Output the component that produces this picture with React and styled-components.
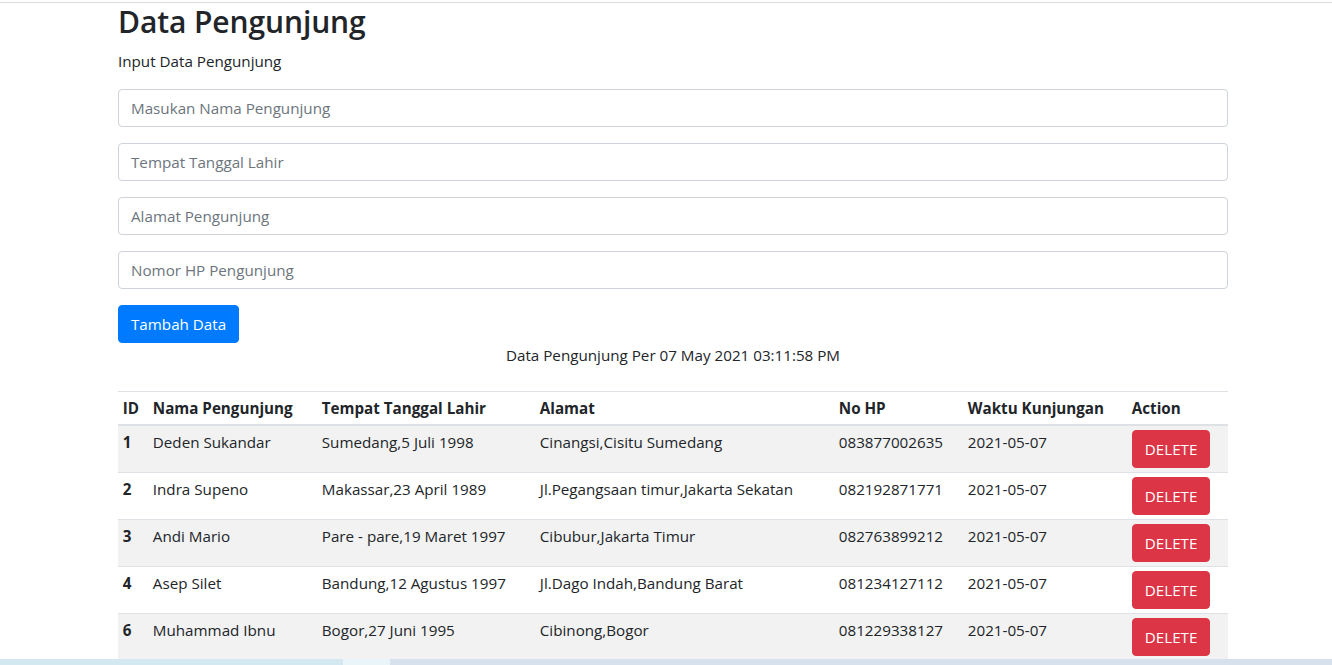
import React from "react";
import styled, { createGlobalStyle } from "styled-components";

const Global = createGlobalStyle`
  html, body { margin: 0; padding: 0; background: #fff; }
  body {
    font-family: "Open Sans", "Noto Sans", "Liberation Sans", sans-serif;
    font-size: 15.2px;
    line-height: 24px;
    color: #212529;
  }
  * { box-sizing: border-box; }
`;

const TopRule = styled.div`
  height: 3px;
  border-bottom: 1px solid #dcdcdc;
`;

const Container = styled.main`
  width: 1110px;
  margin-left: 118px;
`;

const Title = styled.h2`
  margin: 0 0 8px;
  font-size: 30px;
  font-weight: 600;
  line-height: 38px;
  letter-spacing: -0.1px;
`;

const Lead = styled.p`
  margin: 0 0 16px;
`;

const Input = styled.input`
  display: block;
  width: 100%;
  height: 38px;
  padding: 6px 12px;
  margin-bottom: 16px;
  font: inherit;
  color: #495057;
  border: 1px solid #ced4da;
  border-radius: 4px;
  background: #fff;
  &::placeholder { color: #6c757d; opacity: 1; }
`;

const Button = styled.button`
  display: inline-block;
  font: inherit;
  line-height: 24px;
  height: 38px;
  padding: 6px 12px;
  border: 1px solid ${(p) => p.$bg};
  background: ${(p) => p.$bg};
  color: #fff;
  border-radius: 4px;
  cursor: pointer;
`;

const Caption = styled.p`
  text-align: center;
  margin: 0 0 24px;
`;

const Table = styled.table`
  width: 100%;
  border-collapse: collapse;
  table-layout: fixed;
`;

const Th = styled.th`
  text-align: left;
  font-weight: 700;
  padding: 4px 4.8px;
  border-top: 1px solid #dee2e6;
  border-bottom: 2px solid #dee2e6;
  vertical-align: bottom;
  white-space: nowrap;
`;

const Tr = styled.tr`
  background: ${(p) => (p.$odd ? "rgba(0,0,0,0.05)" : "transparent")};
`;

const Td = styled.td`
  padding: 4px 4.8px;
  border-top: 1px solid #dee2e6;
  vertical-align: top;
  font-weight: ${(p) => (p.$bold ? 700 : 400)};
  white-space: nowrap;
`;

const Taskbar = styled.div`
  position: fixed;
  left: 0;
  right: 0;
  bottom: 0;
  height: 6px;
  display: flex;
`;

const TaskSeg = styled.div`
  width: ${(p) => p.$w};
  flex: ${(p) => (p.$grow ? 1 : "none")};
  background: ${(p) => p.$c};
`;

const cols = [30, 169, 218, 299, 129, 164, 101];
const heads = ["ID", "Nama Pengunjung", "Tempat Tanggal Lahir", "Alamat", "No HP", "Waktu Kunjungan", "Action"];
const rows = [
  ["1", "Deden Sukandar", "Sumedang,5 Juli 1998", "Cinangsi,Cisitu Sumedang", "083877002635", "2021-05-07"],
  ["2", "Indra Supeno", "Makassar,23 April 1989", "Jl.Pegangsaan timur,Jakarta Sekatan", "082192871771", "2021-05-07"],
  ["3", "Andi Mario", "Pare - pare,19 Maret 1997", "Cibubur,Jakarta Timur", "082763899212", "2021-05-07"],
  ["4", "Asep Silet", "Bandung,12 Agustus 1997", "Jl.Dago Indah,Bandung Barat", "081234127112", "2021-05-07"],
  ["6", "Muhammad Ibnu", "Bogor,27 Juni 1995", "Cibinong,Bogor", "081229338127", "2021-05-07"],
];

export default function App() {
  return (
    <>
      <Global />
      <TopRule />
      <Container>
        <Title>Data Pengunjung</Title>
        <Lead>Input Data Pengunjung</Lead>
        <Input placeholder="Masukan Nama Pengunjung" />
        <Input placeholder="Tempat Tanggal Lahir" />
        <Input placeholder="Alamat Pengunjung" />
        <Input placeholder="Nomor HP Pengunjung" />
        <Button $bg="#007bff">Tambah Data</Button>
        <Caption>Data Pengunjung Per 07 May 2021 03:11:58 PM</Caption>
        <Table>
          <colgroup>
            {cols.map((w, i) => (
              <col key={i} style={{ width: w }} />
            ))}
          </colgroup>
          <thead>
            <tr>
              {heads.map((h) => (
                <Th key={h}>{h}</Th>
              ))}
            </tr>
          </thead>
          <tbody>
            {rows.map((r, i) => (
              <Tr key={r[0]} $odd={i % 2 === 0}>
                {r.map((c, j) => (
                  <Td key={j} $bold={j === 0}>{c}</Td>
                ))}
                <Td>
                  <Button $bg="#dc3545">DELETE</Button>
                </Td>
              </Tr>
            ))}
          </tbody>
        </Table>
      </Container>
      <Taskbar>
        <TaskSeg $w="343px" $c="#d3e8f0" />
        <TaskSeg $w="47px" $c="#e9f5f9" />
        <TaskSeg $grow $c="#d6e1ed" />
      </Taskbar>
    </>
  );
}
